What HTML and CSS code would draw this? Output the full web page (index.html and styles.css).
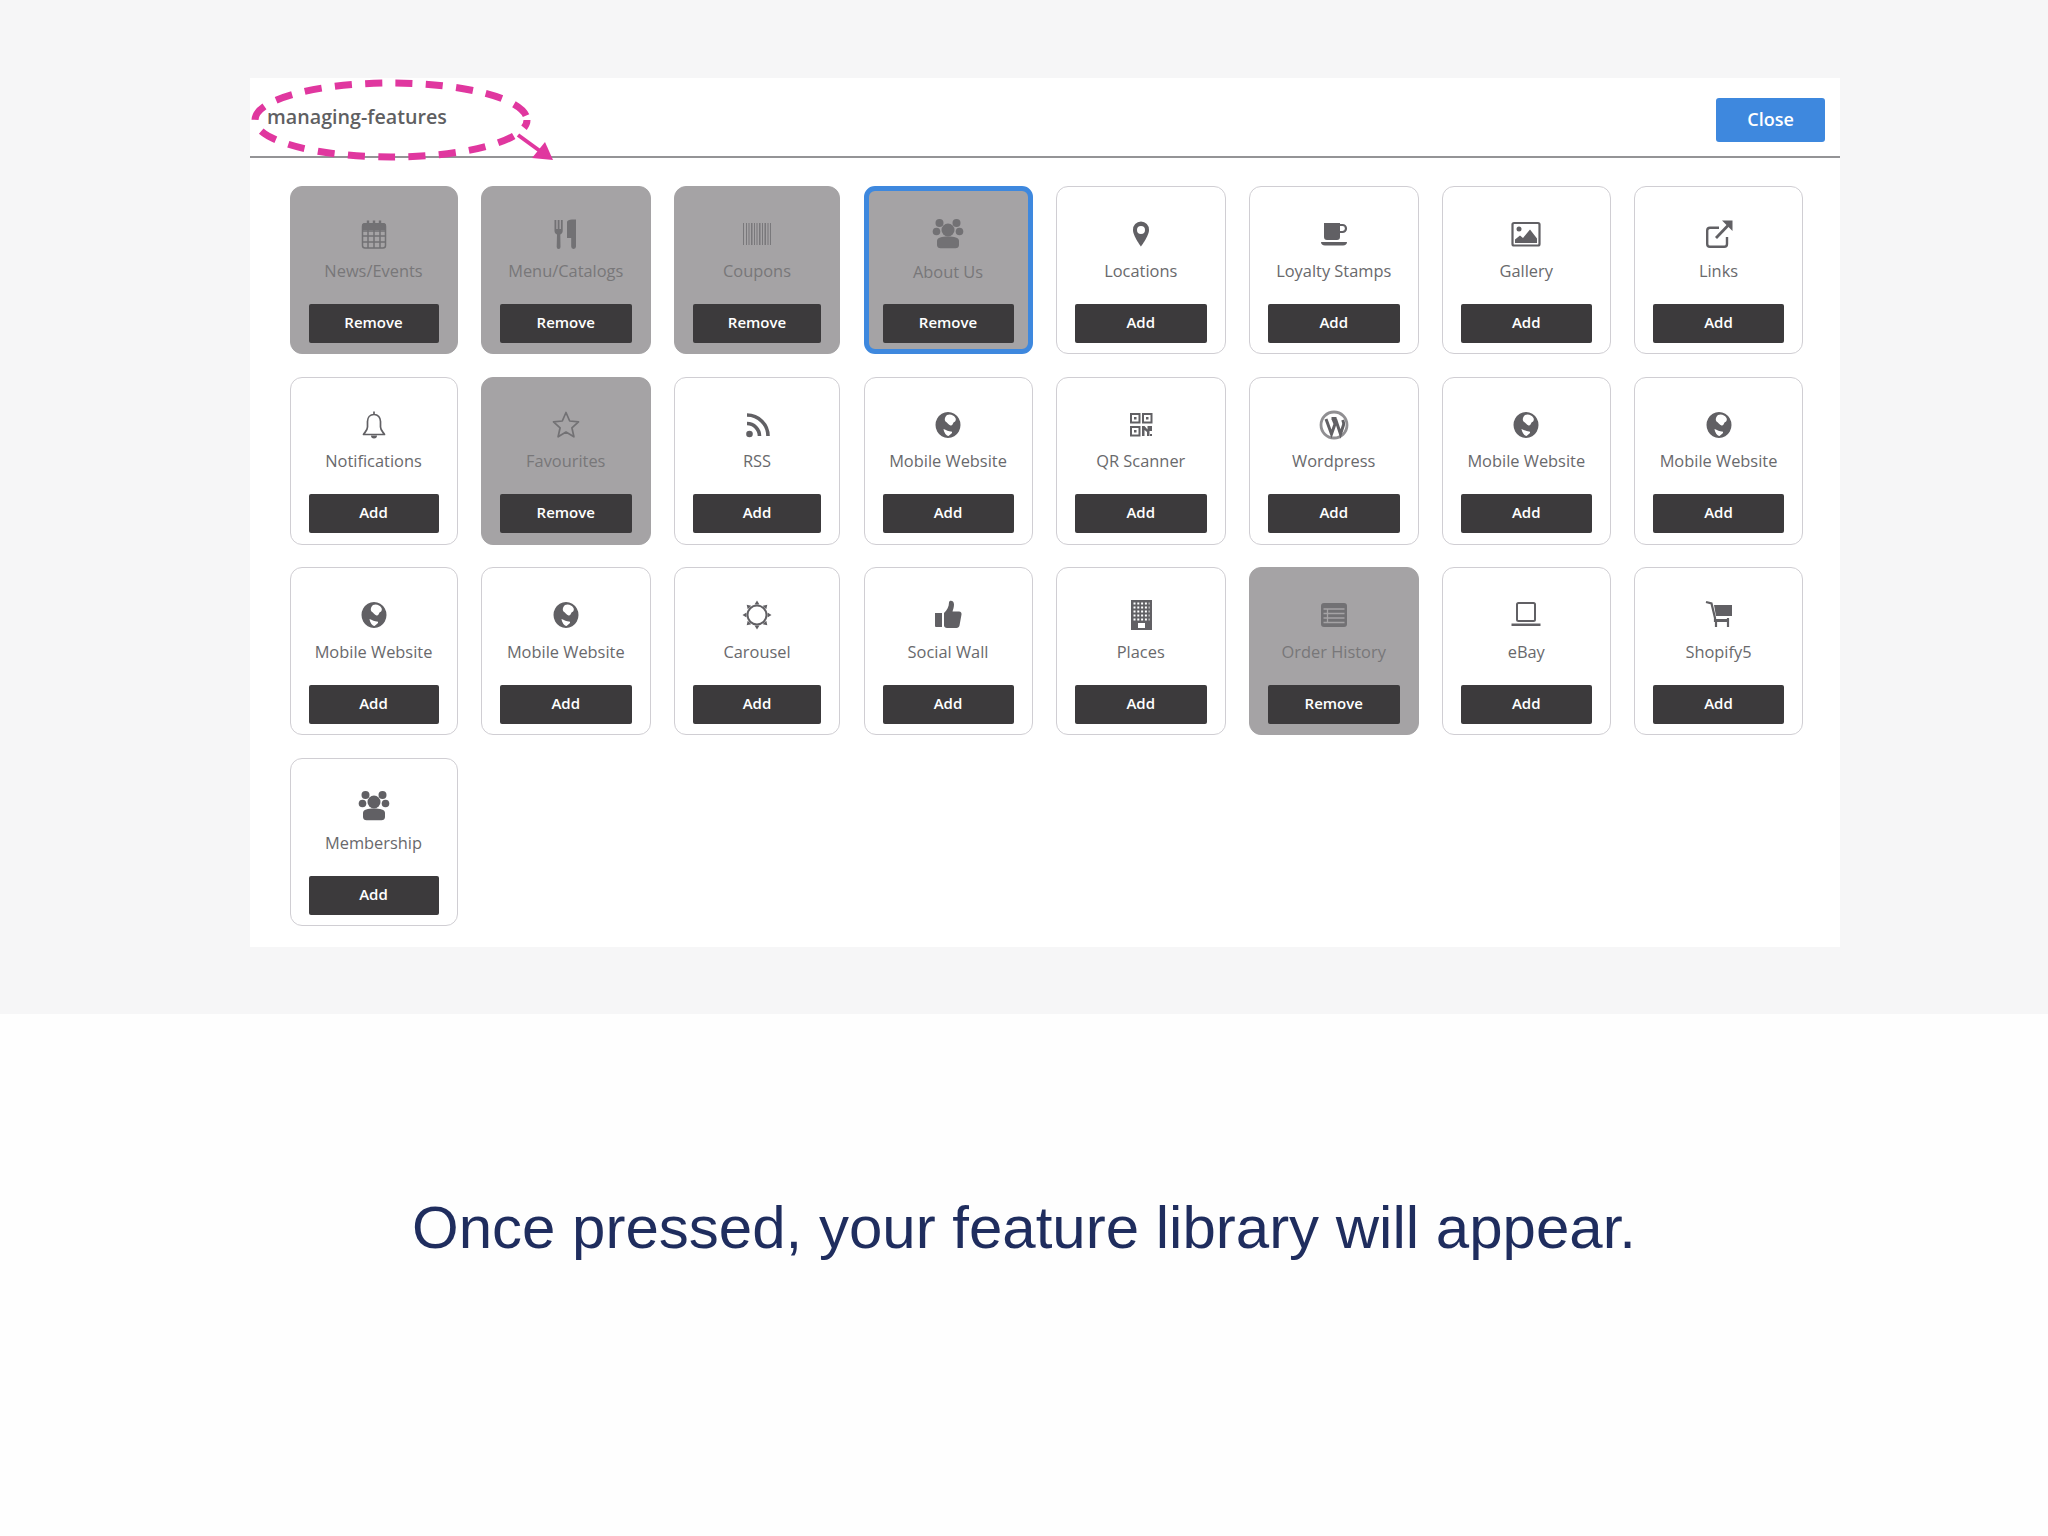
FILE: index.html
```html
<!DOCTYPE html>
<html lang="en">
<head>
<meta charset="utf-8">
<title>Managing features</title>
<link rel="stylesheet" href="styles.css">
</head>
<body>
<svg class="defs" aria-hidden="true">
  <symbol id="i-calendar" viewBox="0 0 32 32"><path d="M4 7.500a2.500 2.500 0 0 1 2.500-2.500h19A2.500 2.500 0 0 1 28 7.500V12H4z" fill="currentColor"/><path d="M10 2.500v5M16 2.500v5M22 2.500v5" stroke="currentColor" stroke-width="2.400" fill="none"/><g fill="none" stroke="currentColor" stroke-width="1.500"><rect x="4.500" y="6" width="23" height="24" rx="2.500"/><path d="M4.500 13h23M4.500 18h23M4.500 24h23M10 12v18M16 12v18M22 12v18"/></g></symbol>
  <symbol id="i-cutlery" viewBox="0 0 32 32"><path d="M4.500 2h1.800v9h1.400V2h1.800v9h1.400V2h1.800v11c0 2-1.300 3-2.400 3.500L10.500 29a1.900 1.900 0 0 1-3.800 0L7 16.500C5.800 16 4.500 15 4.500 13z" fill="currentColor"/><path d="M17 29V4c0-1.500 2.500-2.500 5-2.500h4v27a2.400 2.400 0 0 1-4.800 0V20H17z" fill="currentColor"/></symbol>
  <symbol id="i-barcode" viewBox="0 0 32 32"><g fill="currentColor" opacity=".85"><rect x="2" y="5" width="1" height="22"/><rect x="5" y="5" width="1" height="22"/><rect x="7.500" y="5" width="1" height="22"/><rect x="10" y="5" width="1.500" height="22"/><rect x="13" y="5" width="1" height="22"/><rect x="15.500" y="5" width="1" height="22"/><rect x="18" y="5" width="1.500" height="22"/><rect x="21" y="5" width="1" height="22"/><rect x="23.500" y="5" width="1.500" height="22"/><rect x="26.500" y="5" width="1" height="22"/><rect x="29" y="5" width="1" height="22"/></g></symbol>
  <symbol id="i-users" viewBox="0 0 32 32"><g fill="currentColor"><circle cx="7.500" cy="5" r="4"/><circle cx="24.500" cy="5" r="4"/><circle cx="4.500" cy="13.500" r="3.800"/><circle cx="27.500" cy="13.500" r="3.800"/><circle cx="16" cy="12" r="6.500"/><path d="M5 23c0-3.500 5-4.500 11-4.500s11 1 11 4.500v4c0 2-1.500 3.300-3.500 3.300h-15C6.500 30.300 5 29 5 27z"/></g></symbol>
  <symbol id="i-pin" viewBox="0 0 32 32"><path fill-rule="evenodd" fill="currentColor" d="M16 3.500a8 8 0 0 0-8 8.500C8 18 16 28.500 16 28.500S24 18 24 12a8 8 0 0 0-8-8.500zm0 4.500a4 4 0 1 1 0 8 4 4 0 0 1 0-8z"/></symbol>
  <symbol id="i-cup" viewBox="0 0 32 32"><path fill="currentColor" d="M6 5h16v14a3 3 0 0 1-3 3H9a3 3 0 0 1-3-3zM3 24h26c0 2-1.500 3.500-4 3.500H7c-2.500 0-4-1.500-4-3.500z"/><path fill="none" stroke="currentColor" stroke-width="2.200" d="M22 7h2.500a3.500 3.500 0 0 1 3.500 3.500v0a3.500 3.500 0 0 1-3.500 3.500H22"/></symbol>
  <symbol id="i-image" viewBox="0 0 32 32"><rect x="2.500" y="5" width="27" height="22.500" rx="1.500" fill="none" stroke="currentColor" stroke-width="2.200"/><circle cx="9" cy="11" r="2.500" fill="currentColor"/><path fill="currentColor" d="M5 25v-3.500l5-4 3 2.500 7-8.500 7 9V25z"/></symbol>
  <symbol id="i-link" viewBox="0 0 32 32"><path fill="none" stroke="currentColor" stroke-width="2.400" d="M24 19v7a2.800 2.800 0 0 1-2.800 2.800H7A2.800 2.800 0 0 1 4.200 26V12.500A2.800 2.800 0 0 1 7 9.700h9"/><path fill="none" stroke="currentColor" stroke-width="2.800" d="M13 20L25 7.500"/><path fill="currentColor" d="M19 2.500h10.500V13z"/></symbol>
  <symbol id="i-bell" viewBox="0 0 32 32"><path fill="none" stroke="currentColor" stroke-width="1.700" stroke-linejoin="round" d="M16 2.500v3M16 5.500c-4 0-6.500 3-6.500 7v5.500c0 3-2.500 5-4 7.500h21c-1.500-2.500-4-4.500-4-7.500v-5.500c0-4-2.500-7-6.500-7z"/><path fill="currentColor" d="M13 26.500h6a3 3 0 0 1-6 0z"/></symbol>
  <symbol id="i-star" viewBox="0 0 32 32"><path fill="none" stroke="currentColor" stroke-width="1.700" stroke-linejoin="round" d="M16 3.500l3.700 8.500 8.800.8-6.600 6 2 9L16 23l-7.900 4.800 2-9-6.600-6 8.800-.8z"/></symbol>
  <symbol id="i-rss" viewBox="0 0 32 32"><circle cx="8.500" cy="25" r="3.300" fill="currentColor"/><path fill="none" stroke="currentColor" stroke-width="3.600" d="M6 14.500a12.500 12.500 0 0 1 12.500 12.500M6 6a21 21 0 0 1 21 21"/></symbol>
  <symbol id="i-globe" viewBox="0 0 32 32"><path fill="currentColor" fill-rule="evenodd" d="M16 3a12.500 13 0 1 0 .01 0zM15 6c3-1.500 7 0 8.500 3 1 2.500-.5 4-2 4.500-1 2-1.500 3.500-3 3-2-.5-3-3-5-4-1.500-1.500-.5-5 1.500-6.500zM11.500 20c2.500 1 5.500 2.500 7.500 2.500 1 0 1.500 1 .5 2l-3 2.500c-2.500-.5-4.500-3.500-5-7z"/></symbol>
  <symbol id="i-qr" viewBox="0 0 32 32"><g fill="none" stroke="currentColor" stroke-width="2"><rect x="6" y="5" width="8.500" height="8.500"/><rect x="18" y="5" width="8.500" height="8.500"/><rect x="6" y="18" width="8.500" height="8.500"/></g><g fill="currentColor"><rect x="9" y="8" width="2.500" height="2.500"/><rect x="21" y="8" width="2.500" height="2.500"/><rect x="9" y="21" width="2.500" height="2.500"/><path d="M17 17h2.500l3 3.500V17H27v5h-2.500v5H22v-4l-2.500-2v6H17z"/><rect x="25" y="25" width="2" height="2"/></g></symbol>
  <symbol id="i-wp" viewBox="0 0 32 32"><circle cx="16" cy="16" r="13" fill="none" stroke="currentColor" stroke-opacity=".7" stroke-width="2.800"/><path fill="none" stroke="currentColor" stroke-width="3" d="M8 10l5.500 15 3.500-10-2-5M13.500 9.500h5M17.500 10l5 15 3-9c.7-2-.3-3.500-.8-5"/></symbol>
  <symbol id="i-sun" viewBox="0 0 32 32"><circle cx="16" cy="16" r="9.500" fill="none" stroke="currentColor" stroke-width="2"/><path fill="currentColor" d="M16 1.500l2.500 4h-5zM16 30.500l-2.500-4h5zM1.500 16l4-2.500v5zM30.500 16l-4 2.500v-5zM5.700 5.700l4.600 1-3.600 3.600zM26.300 26.300l-4.600-1 3.600-3.600zM26.300 5.700l-1 4.600-3.600-3.600zM5.700 26.300l1-4.600 3.600 3.600z"/></symbol>
  <symbol id="i-thumb" viewBox="0 0 32 32"><path fill="currentColor" d="M3 14h7v14H4a1 1 0 0 1-1-1zM12 14c3-3 5-6 5-10.500 0-2.500 5-2.500 5 2 0 3-1 5-1.500 7H27c2 0 2.800 1.500 2.500 3l-2 11c-.3 1.500-1.500 2.500-3 2.500H15c-1.500 0-3-1-3-2.500z"/></symbol>
  <symbol id="i-building" viewBox="0 0 32 32"><rect x="6" y="1" width="21" height="30" fill="currentColor"/><path fill="none" stroke="#fff" stroke-width="2" stroke-dasharray="2 1.800" d="M8.500 4.500h16M8.500 8.500h16M8.500 12.500h16M8.500 16.500h16M8.500 20.500h16"/><rect x="13" y="24" width="7" height="5" fill="#fff"/></symbol>
  <symbol id="i-order" viewBox="0 0 32 32"><rect x="3" y="4" width="26" height="24" rx="3" fill="currentColor"/><path fill="none" stroke="#a5a3a5" stroke-width="1.300" d="M5.500 10h21M5.500 14.500h21M5.500 19h21M5.500 23.500h21M9.500 10v14"/></symbol>
  <symbol id="i-laptop" viewBox="0 0 32 32"><rect x="7" y="4" width="18" height="18" rx="1.500" fill="none" stroke="currentColor" stroke-width="2"/><path fill="currentColor" d="M1.500 24.500h29V27h-29z"/></symbol>
  <symbol id="i-cart" viewBox="0 0 32 32"><path fill="currentColor" d="M11 6h18v11H13z"/><path fill="none" stroke="currentColor" stroke-width="2.200" d="M3 3l5.500 1.500L12 19v3h14M13 22v6M25 19v9M11 21h15"/></symbol>
</svg>

<section class="stage">
  <div class="panel">
    <header class="panel-head">
      <h1 class="panel-title">managing-features</h1>
      <button class="close-btn">Close</button>
      <svg class="callout" viewBox="0 0 320 100" aria-hidden="true">
        <ellipse class="callout-ring" cx="141" cy="42" rx="136" ry="37"/>
        <path class="callout-line" d="M268 57L290 73"/>
        <path class="callout-head" d="M282 80L295 64L303 82z"/>
      </svg>
    </header>
    <div class="grid">
      <article class="card on"><svg class="icon"><use href="#i-calendar"/></svg><p class="label">News/Events</p><button class="action">Remove</button></article>
      <article class="card on"><svg class="icon"><use href="#i-cutlery"/></svg><p class="label">Menu/Catalogs</p><button class="action">Remove</button></article>
      <article class="card on"><svg class="icon"><use href="#i-barcode"/></svg><p class="label">Coupons</p><button class="action">Remove</button></article>
      <article class="card on focus"><svg class="icon"><use href="#i-users"/></svg><p class="label">About Us</p><button class="action">Remove</button></article>
      <article class="card"><svg class="icon"><use href="#i-pin"/></svg><p class="label">Locations</p><button class="action">Add</button></article>
      <article class="card"><svg class="icon"><use href="#i-cup"/></svg><p class="label">Loyalty Stamps</p><button class="action">Add</button></article>
      <article class="card"><svg class="icon"><use href="#i-image"/></svg><p class="label">Gallery</p><button class="action">Add</button></article>
      <article class="card"><svg class="icon"><use href="#i-link"/></svg><p class="label">Links</p><button class="action">Add</button></article>

      <article class="card"><svg class="icon"><use href="#i-bell"/></svg><p class="label">Notifications</p><button class="action">Add</button></article>
      <article class="card on"><svg class="icon"><use href="#i-star"/></svg><p class="label">Favourites</p><button class="action">Remove</button></article>
      <article class="card"><svg class="icon"><use href="#i-rss"/></svg><p class="label">RSS</p><button class="action">Add</button></article>
      <article class="card"><svg class="icon"><use href="#i-globe"/></svg><p class="label">Mobile Website</p><button class="action">Add</button></article>
      <article class="card"><svg class="icon"><use href="#i-qr"/></svg><p class="label">QR Scanner</p><button class="action">Add</button></article>
      <article class="card"><svg class="icon"><use href="#i-wp"/></svg><p class="label">Wordpress</p><button class="action">Add</button></article>
      <article class="card"><svg class="icon"><use href="#i-globe"/></svg><p class="label">Mobile Website</p><button class="action">Add</button></article>
      <article class="card"><svg class="icon"><use href="#i-globe"/></svg><p class="label">Mobile Website</p><button class="action">Add</button></article>

      <article class="card"><svg class="icon"><use href="#i-globe"/></svg><p class="label">Mobile Website</p><button class="action">Add</button></article>
      <article class="card"><svg class="icon"><use href="#i-globe"/></svg><p class="label">Mobile Website</p><button class="action">Add</button></article>
      <article class="card"><svg class="icon"><use href="#i-sun"/></svg><p class="label">Carousel</p><button class="action">Add</button></article>
      <article class="card"><svg class="icon"><use href="#i-thumb"/></svg><p class="label">Social Wall</p><button class="action">Add</button></article>
      <article class="card"><svg class="icon"><use href="#i-building"/></svg><p class="label">Places</p><button class="action">Add</button></article>
      <article class="card on"><svg class="icon"><use href="#i-order"/></svg><p class="label">Order History</p><button class="action">Remove</button></article>
      <article class="card"><svg class="icon"><use href="#i-laptop"/></svg><p class="label">eBay</p><button class="action">Add</button></article>
      <article class="card"><svg class="icon"><use href="#i-cart"/></svg><p class="label">Shopify5</p><button class="action">Add</button></article>

      <article class="card"><svg class="icon"><use href="#i-users"/></svg><p class="label">Membership</p><button class="action">Add</button></article>
    </div>
  </div>
</section>

<section class="caption">
  <p class="caption-text">Once pressed, your feature library will appear.</p>
</section>
</body>
</html>
```

FILE: styles.css
```css
* { box-sizing: border-box; }

html, body {
  margin: 0;
  padding: 0;
}

body {
  width: 2048px;
  height: 1536px;
  overflow: hidden;
  background: #fefefe;
  font-family: "Open Sans", "Liberation Sans", sans-serif;
}

.defs {
  position: absolute;
  width: 0;
  height: 0;
}

.stage {
  height: 1014px;
  padding: 78px 208px 0 250px;
  background: #f6f6f7;
}

.panel {
  height: 869px;
  background: #fff;
}

.panel-head {
  position: relative;
  display: flex;
  align-items: flex-start;
  justify-content: space-between;
  height: 80px;
  padding: 20px 15px 0 17px;
  border-bottom: 2px solid #949496;
}

.panel-title {
  margin: 0;
  font-size: 19.7px;
  font-weight: 600;
  line-height: 38px;
  color: #5f5f62;
}

.close-btn {
  width: 109px;
  height: 44px;
  padding: 0 0 2px;
  border: 0;
  border-radius: 3px;
  background: #3e88de;
  color: #fff;
  font: 600 18px "Open Sans", sans-serif;
}

.callout {
  position: absolute;
  left: 0;
  top: 0;
  width: 320px;
  height: 100px;
  overflow: visible;
  pointer-events: none;
}

.callout-ring {
  fill: none;
  stroke: #e0379f;
  stroke-width: 7;
  stroke-dasharray: 17 13.3;
  stroke-dashoffset: 8.5;
}

.callout-line {
  fill: none;
  stroke: #e0379f;
  stroke-width: 4;
}

.callout-head {
  fill: #e0379f;
}

.grid {
  display: grid;
  grid-template-columns: 168px 169.5px 166px 169px 169.5px 169.5px 168.5px 169px;
  grid-auto-rows: 168px;
  gap: 22.7px 23.5px;
  padding: 28px 0 0 39.5px;
}

.card {
  display: flex;
  flex-direction: column;
  align-items: center;
  padding: 31px 18px 10.5px;
  border: 1px solid #d0ced3;
  border-radius: 12px;
  background: #fff;
  color: #616064;
}

.card.on {
  background: #a5a3a5;
  border-color: #a5a3a5;
  color: #727174;
}

.card.focus {
  padding: 27px 14px 6.5px;
  border: 5px solid #3e88de;
  border-radius: 11px;
}

.icon {
  flex: none;
  width: 32px;
  height: 32px;
}

.label {
  margin: 9.5px 0 0;
  font-size: 16.4px;
  line-height: 22px;
  color: #69696c;
  white-space: nowrap;
}

.card.on .label {
  color: #787779;
}

.card.focus .label {
  margin-top: 10.5px;
}

.action {
  align-self: stretch;
  height: 39px;
  margin-top: auto;
  padding: 0 0 3px;
  border: 0;
  border-radius: 2px;
  background: #3c3a3c;
  color: #fff;
  font: 600 15px "Open Sans", sans-serif;
}

.caption {
  height: 522px;
  padding-top: 180px;
  text-align: center;
}

.caption-text {
  margin: 0;
  font-family: "Liberation Sans", Arial, sans-serif;
  font-size: 60px;
  line-height: 68px;
  color: #1f2d5e;
}
```
